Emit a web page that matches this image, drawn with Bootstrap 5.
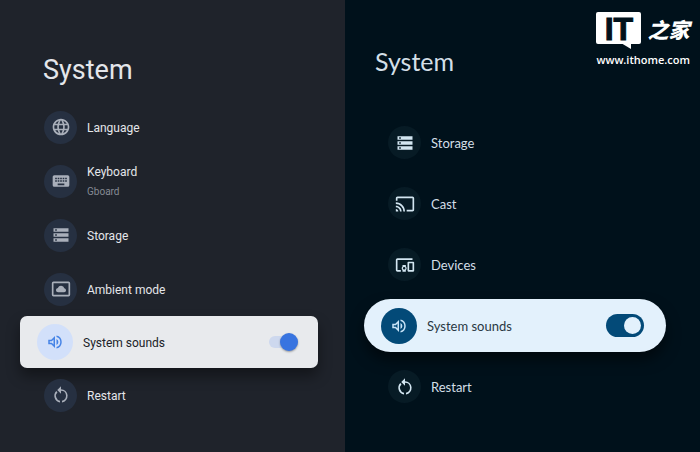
<!DOCTYPE html>
<html lang="en">
<head>
<meta charset="utf-8">
<meta name="viewport" content="width=device-width, initial-scale=1">
<title>System settings</title>
<link href="https://cdn.jsdelivr.net/npm/bootstrap@5.3.0/dist/css/bootstrap.min.css" rel="stylesheet">
<style>
  body { background: #00111b; font-family: Roboto, "Liberation Sans", sans-serif; }
  .pane { min-height: 100vh; font-size: 12px; line-height: 16px; }
  .pane-classic { flex: 345 1 0; background: #1f232b; color: #e4e6ea; }
  .pane-modern { flex: 355 1 0; background: #00111b; color: #d3dfe7; font-family: Lato, sans-serif; font-size: 13px; }
  .pane-title { font-size: 27px; line-height: 32px; font-weight: 400; margin: 0; }
  .pane-classic .pane-title { padding: 54px 0 14px 43px; }
  .pane-modern .pane-title { padding: 45px 0 35px 30px; font-size: 25px; }
  .entry { color: inherit; text-decoration: none; gap: 10px; }
  .pane-classic .entry { height: 54px; padding-left: 44px; }
  .pane-modern .entry { height: 61px; padding-left: 43px; }
  .pane-classic .entry-text { padding-top: 1px; }
  .bubble { width: 33px; height: 33px; border-radius: 50%; flex: none; }
  .bubble svg { width: 20px; height: 20px; fill: currentColor; }
  .pane-classic .bubble { background: #263041; color: #a9afba; }
  .pane-modern .bubble { background: #071b25; color: #d3e6f1; }
  .pane .entry.focused { padding: 0 20px 0 17px; }
  .pane-modern .entry.focused { padding-right: 22px; }
  .focused .bubble { width: 36px; height: 36px; }
  .bubble .icon-sm { width: 18px; height: 18px; }
  .pane-classic .focused { height: 52px; margin: 0 27px 0 20px; border-radius: 7px; background: #e8eaed; color: #202227; box-shadow: 0 8px 14px rgba(0,0,0,.4); }
  .pane-modern .focused { height: 53px; margin: 4px 34px 4px 19px; border-radius: 27px; background: #e3f1fc; color: #2a3843; box-shadow: 0 8px 14px rgba(0,0,0,.5); }
  .pane-classic .focused .bubble { background: #d2e0fa; color: #4583e6; }
  .pane-modern .focused .bubble { background: #034a78; color: #c8e4f8; }
  .sub { color: #858a93; font-size: 10px; }
  .toggle { appearance: none; position: relative; margin: 0; flex: none; }
  .toggle::before, .toggle::after { content: ""; position: absolute; }
  .pane-classic .toggle { width: 29px; height: 18px; }
  .pane-classic .toggle::before { inset: 3px 0; border-radius: 6px; background: #cdd8ee; }
  .pane-classic .toggle::after { right: 0; top: 0; width: 18px; height: 18px; border-radius: 50%; background: #3874e0; box-shadow: 0 1px 2px rgba(0,0,0,.35); }
  .pane-modern .toggle { width: 38px; height: 23px; border-radius: 12px; background: #034a78; }
  .pane-modern .toggle::after { right: 3px; top: 3px; width: 17px; height: 17px; border-radius: 50%; background: #e3f1fc; }
  .brand { position: absolute; top: 12px; right: 10px; color: #fff; text-decoration: none; }
  .brand-mark { gap: 6px; height: 40px; }
  .brand-box { position: relative; background: #fff; color: #00111b; width: 45px; height: 32px; border-radius: 2px; font: 700 32px/34px "Liberation Sans", sans-serif; -webkit-text-stroke: 1px #00111b; }
  .brand-box::after { content: ""; position: absolute; top: 31px; right: 10px; border-top: 6px solid #fff; border-left: 10px solid transparent; }
  .brand-han { font: italic 900 21px/34px "Noto Sans CJK SC", sans-serif; }
  .brand-url { font: 600 11px/16px "Open Sans", sans-serif; }
</style>
</head>
<body>
<svg class="d-none" xmlns="http://www.w3.org/2000/svg">
  <symbol id="globe" viewBox="0 0 24 24"><path d="M11.99 2C6.47 2 2 6.48 2 12s4.47 10 9.99 10C17.52 22 22 17.52 22 12S17.52 2 11.99 2zm6.93 6h-2.95a15.65 15.65 0 0 0-1.38-3.56A8.03 8.03 0 0 1 18.92 8zM12 4.04c.83 1.2 1.48 2.53 1.91 3.96h-3.82c.43-1.43 1.08-2.76 1.91-3.96zM4.26 14C4.1 13.36 4 12.69 4 12s.1-1.36.26-2h3.38c-.08.66-.14 1.32-.14 2s.06 1.34.14 2H4.26zm.82 2h2.95c.32 1.25.78 2.45 1.38 3.56A7.99 7.99 0 0 1 5.08 16zm2.95-8H5.08a7.99 7.99 0 0 1 4.33-3.56A15.65 15.65 0 0 0 8.03 8zM12 19.96c-.83-1.2-1.48-2.53-1.91-3.96h3.82c-.43 1.43-1.08 2.76-1.91 3.96zM14.34 14H9.66c-.09-.66-.16-1.32-.16-2s.07-1.35.16-2h4.68c.09.65.16 1.32.16 2s-.07 1.34-.16 2zm.25 5.56c.6-1.11 1.06-2.31 1.38-3.56h2.95a8.03 8.03 0 0 1-4.33 3.56zM16.36 14c.08-.66.14-1.32.14-2s-.06-1.34-.14-2h3.38c.16.64.26 1.31.26 2s-.1 1.36-.26 2h-3.38z"/></symbol>
  <symbol id="keyboard" viewBox="0 0 24 24"><path fill-rule="evenodd" d="M20 5H4a2 2 0 0 0-2 2v10a2 2 0 0 0 2 2h16a2 2 0 0 0 2-2V7a2 2 0 0 0-2-2zM11 8h2v2h-2zM11 11h2v2h-2zM8 8h2v2H8zM8 11h2v2H8zM5 11h2v2H5zM5 8h2v2H5zM8 15h8v2H8zM14 11h2v2h-2zM14 8h2v2h-2zM17 11h2v2h-2zM17 8h2v2h-2z"/></symbol>
  <symbol id="storage" viewBox="0 0 24 24"><path d="M3 20h18v-4H3v4zm2-3h2v2H5v-2zM3 4v4h18V4H3zm4 3H5V5h2v2zm-4 7h18v-4H3v4zm2-3h2v2H5v-2z"/></symbol>
  <symbol id="ambient" viewBox="0 0 24 24"><path fill-rule="evenodd" d="M3 3h18a2 2 0 0 1 2 2v14a2 2 0 0 1-2 2H3a2 2 0 0 1-2-2V5a2 2 0 0 1 2-2zm0 2v14h18V5zM8.500 16a2.600 2.600 0 0 1-.3-5.180A4.100 4.100 0 0 1 16 11.200a2.420 2.420 0 0 1-.2 4.800z"/></symbol>
  <symbol id="sound" viewBox="0 0 24 24"><path d="M3 9v6h4l5 5V4L7 9H3zm7-.17v6.340L7.830 13H5v-2h2.830L10 8.830zM16.500 12A4.500 4.500 0 0 0 14 7.970v8.050A4.470 4.470 0 0 0 16.500 12zM14 3.230v2.060a7 7 0 0 1 0 13.420v2.060a9 9 0 0 0 0-17.540z"/></symbol>
  <symbol id="restart" viewBox="0 0 24 24"><path d="M12 5V1.500L7.500 6 12 10.500V7a6 6 0 0 1 1.200 11.880v2.020A8 8 0 0 0 12 5zM6.340 7.340A8 8 0 0 0 10.800 20.900v-2.020A6 6 0 0 1 7.760 8.760z"/></symbol>
  <symbol id="cast" viewBox="0 0 24 24"><path d="M21 3H3c-1.100 0-2 .9-2 2v3h2V5h18v14h-7v2h7c1.100 0 2-.9 2-2V5c0-1.100-.9-2-2-2zM1 18v3h3c0-1.660-1.340-3-3-3zm0-4v2c2.760 0 5 2.240 5 5h2c0-3.870-3.130-7-7-7zm0-4v2a9 9 0 0 1 9 9h2c0-6.080-4.930-11-11-11z"/></symbol>
  <symbol id="devices" viewBox="0 0 24 24"><path d="M3 6h18V4H3c-1.100 0-2 .9-2 2v12c0 1.100.9 2 2 2h4v-2H3V6zm10 6H9v1.780c-.61.55-1 1.330-1 2.220s.39 1.670 1 2.220V20h4v-1.780c.61-.55 1-1.340 1-2.220s-.39-1.670-1-2.220V12zm-2 5.500a1.500 1.500 0 1 1 0-3 1.500 1.500 0 0 1 0 3zM22 8h-6c-.5 0-1 .5-1 1v10c0 .5.5 1 1 1h6c.5 0 1-.5 1-1V9c0-.5-.5-1-1-1zm-1 10h-4v-8h4v8z"/></symbol>
</svg>

<main class="d-flex position-relative">
  <section class="pane pane-classic">
    <h1 class="pane-title">System</h1>
    <nav class="d-flex flex-column" aria-label="System, classic">
      <a href="#" class="entry d-flex align-items-center"><span class="bubble d-flex align-items-center justify-content-center"><svg><use href="#globe"/></svg></span><span class="entry-text">Language</span></a>
      <a href="#" class="entry d-flex align-items-center"><span class="bubble d-flex align-items-center justify-content-center"><svg><use href="#keyboard"/></svg></span><span class="entry-text d-flex flex-column gap-1"><span>Keyboard</span><span class="sub">Gboard</span></span></a>
      <a href="#" class="entry d-flex align-items-center"><span class="bubble d-flex align-items-center justify-content-center"><svg><use href="#storage"/></svg></span><span class="entry-text">Storage</span></a>
      <a href="#" class="entry d-flex align-items-center"><span class="bubble d-flex align-items-center justify-content-center"><svg><use href="#ambient"/></svg></span><span class="entry-text">Ambient mode</span></a>
      <label class="entry focused d-flex align-items-center" for="sounds-classic"><span class="bubble d-flex align-items-center justify-content-center"><svg class="icon-sm"><use href="#sound"/></svg></span><span class="entry-text flex-grow-1">System sounds</span><input class="toggle" type="checkbox" role="switch" id="sounds-classic" checked></label>
      <a href="#" class="entry d-flex align-items-center"><span class="bubble d-flex align-items-center justify-content-center"><svg><use href="#restart"/></svg></span><span class="entry-text">Restart</span></a>
    </nav>
  </section>

  <section class="pane pane-modern">
    <h1 class="pane-title">System</h1>
    <nav class="d-flex flex-column" aria-label="System, modern">
      <a href="#" class="entry d-flex align-items-center"><span class="bubble d-flex align-items-center justify-content-center"><svg><use href="#storage"/></svg></span><span class="entry-text">Storage</span></a>
      <a href="#" class="entry d-flex align-items-center"><span class="bubble d-flex align-items-center justify-content-center"><svg><use href="#cast"/></svg></span><span class="entry-text">Cast</span></a>
      <a href="#" class="entry d-flex align-items-center"><span class="bubble d-flex align-items-center justify-content-center"><svg><use href="#devices"/></svg></span><span class="entry-text">Devices</span></a>
      <label class="entry focused d-flex align-items-center" for="sounds-modern"><span class="bubble d-flex align-items-center justify-content-center"><svg class="icon-sm"><use href="#sound"/></svg></span><span class="entry-text flex-grow-1">System sounds</span><input class="toggle" type="checkbox" role="switch" id="sounds-modern" checked></label>
      <a href="#" class="entry d-flex align-items-center"><span class="bubble d-flex align-items-center justify-content-center"><svg><use href="#restart"/></svg></span><span class="entry-text">Restart</span></a>
    </nav>
  </section>

  <a href="#" class="brand d-flex flex-column">
    <span class="brand-mark d-flex align-items-start">
      <span class="brand-box text-center">IT</span>
      <span class="brand-han" lang="zh">之家</span>
    </span>
    <span class="brand-url">www.ithome.com</span>
  </a>
</main>
<script src="https://cdn.jsdelivr.net/npm/bootstrap@5.3.0/dist/js/bootstrap.bundle.min.js"></script>
</body>
</html>
